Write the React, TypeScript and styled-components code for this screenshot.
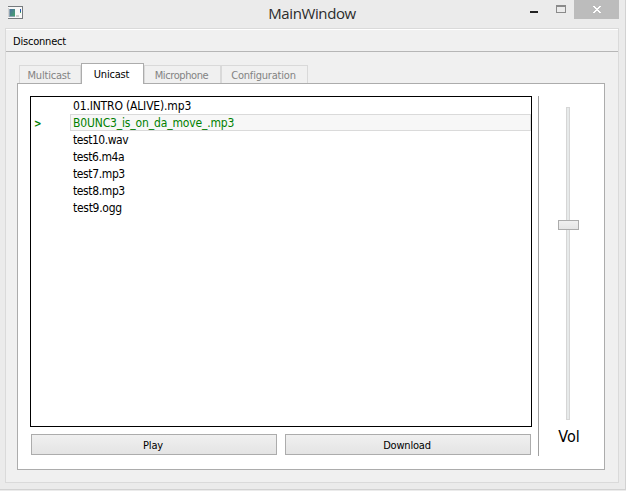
import React from "react";
import styled, { createGlobalStyle } from "styled-components";

const Global = createGlobalStyle`
  * { box-sizing: border-box; }
  body { margin: 0; background: #ebebeb; }
`;

const Window = styled.div`
  display: flex;
  flex-direction: column;
  width: 626px;
  height: 490px;
  padding: 0 6px 6px 5px;
  background: #ebebeb;
  border-right: 1px solid #d2d2d2;
  border-bottom: 1px solid #d2d2d2;
  font: 11px/14px "DejaVu Sans Condensed", "DejaVu Sans", sans-serif;
  letter-spacing: -0.2px;
  color: #000;
  cursor: default;
`;

const TitleBar = styled.header`
  display: grid;
  grid-template-columns: 99px 1fr 99px;
  height: 28px;
  flex: none;
`;

const AppIcon = styled.svg`
  width: 15px;
  height: 13px;
  margin: 6px 0 0 3px;
`;

const Title = styled.h1`
  margin: 3px 0 0;
  text-align: center;
  font: 400 15px/21px "Open Sans", sans-serif;
  letter-spacing: -0.38px;
  color: #2b2b2b;
`;

const Controls = styled.div`
  display: flex;
  justify-content: flex-end;
  height: 19px;
`;

const ControlButton = styled.button<{ $close?: boolean }>`
  width: ${(p) => (p.$close ? 45 : 27)}px;
  height: 19px;
  padding: 0;
  border: 0;
  background: ${(p) => (p.$close ? "#bcbcbc" : "transparent")};
  svg { display: block; }
`;

const Client = styled.main`
  flex: 1;
  display: flex;
  flex-direction: column;
  border: 1px solid #dadada;
  background: #f0f0f0;
`;

const MenuBar = styled.nav`
  height: 23px;
  padding: 5px 7px 0;
  border-top: 1px solid #fff;
  border-bottom: 1px solid #b6b6b6;
`;

const Tabs = styled.div`
  display: flex;
  align-items: flex-end;
  height: 31px;
  padding-left: 13px;
`;

const Tab = styled.div<{ $w: number; $spacing?: number; $active?: boolean }>`
  width: ${(p) => p.$w}px;
  height: ${(p) => (p.$active ? 21 : 18)}px;
  padding: ${(p) => (p.$active ? 4 : 3)}px 2px 0 0;
  margin-bottom: ${(p) => (p.$active ? -1 : 0)}px;
  text-align: center;
  letter-spacing: ${(p) => p.$spacing ?? -0.2}px;
  color: ${(p) => (p.$active ? "#000" : "#838383")};
  background: ${(p) => (p.$active ? "#fff" : "#f0f0f0")};
  border: 1px solid ${(p) => (p.$active ? "#acacac" : "#d9d9d9")};
  border-bottom: 0;
  z-index: ${(p) => (p.$active ? 1 : 0)};
`;

const Pane = styled.section`
  display: flex;
  width: 588px;
  height: 387px;
  margin-left: 11px;
  padding: 12px 0 0 12px;
  border: 1px solid #acacac;
  background: #fff;
`;

const Library = styled.div`
  width: 502px;
`;

const FileList = styled.div`
  height: 331px;
  border: 1px solid #000;
  font-size: 12px;
`;

const FileRow = styled.div<{ $current?: boolean }>`
  display: grid;
  grid-template-columns: 39px 1fr;
  height: 17px;
  color: ${(p) => (p.$current ? "#008000" : "#000")};
`;

const Marker = styled.span`
  padding-left: 3px;
  line-height: 19px;
  font-size: 10px;
  font-weight: 700;
`;

const FileName = styled.span<{ $current?: boolean; $spacing: number }>`
  height: 17px;
  padding-left: 2px;
  line-height: 17px;
  letter-spacing: ${(p) => p.$spacing}px;
  border: 1px solid ${(p) => (p.$current ? "#dadada" : "transparent")};
  background: ${(p) => (p.$current ? "#f7f7f7" : "transparent")};
`;

const Actions = styled.div`
  display: flex;
  gap: 8px;
  padding: 7px 1px 0;
`;

const ActionButton = styled.button`
  width: 246px;
  height: 21px;
  padding: 2px 2px 0 0;
  border: 1px solid #acacac;
  background: linear-gradient(#f0f0f0, #e4e4e4);
  font: inherit;
  letter-spacing: inherit;
  color: #000;
`;

const Divider = styled.div`
  width: 1px;
  height: 360px;
  margin-left: 6px;
  background: #a0a0a0;
`;

const Volume = styled.div`
  display: flex;
  flex-direction: column;
  align-items: center;
  width: 58px;
  padding-top: 11px;
`;

const Track = styled.div`
  display: flex;
  flex-direction: column;
  align-items: center;
  width: 4px;
  height: 313px;
  padding-top: 112px;
  border: 1px solid #d6d6d6;
  background: #e7eaea;
`;

const Thumb = styled.div`
  flex: none;
  width: 21px;
  height: 10px;
  margin-left: 1px;
  border: 1px solid #acacac;
  background: linear-gradient(#f0f0f0, #e5e5e5);
`;

const VolumeLabel = styled.label`
  margin: 7px 0 0 2px;
  font-size: 16px;
  line-height: 20px;
  letter-spacing: 0;
`;

const TABS = [
  { name: "Multicast", width: 62 },
  { name: "Unicast", width: 63, active: true },
  { name: "Microphone", width: 77, spacing: -0.4 },
  { name: "Configuration", width: 87 },
];

const FILES = [
  { name: "01.INTRO (ALIVE).mp3", spacing: -0.16 },
  { name: "B0UNC3_is_on_da_move_.mp3", spacing: -0.15 },
  { name: "test10.wav", spacing: -0.45 },
  { name: "test6.m4a", spacing: -0.42 },
  { name: "test7.mp3", spacing: -0.38 },
  { name: "test8.mp3", spacing: -0.38 },
  { name: "test9.ogg", spacing: -0.28 },
];
const CURRENT = 1;

export default function App() {
  return (
    <>
      <Global />
      <Window>
        <TitleBar>
          <AppIcon viewBox="0 0 15 13" shapeRendering="crispEdges">
            <defs>
              <linearGradient id="screen" x1="0" y1="0" x2="1" y2="1">
                <stop offset="0" stopColor="#4f70a0" />
                <stop offset="1" stopColor="#45a36c" />
              </linearGradient>
            </defs>
            <rect width="15" height="13" fill="#777b7e" />
            <rect y="1" width="14" height="11" fill="#f8f8f8" />
            <rect x="0" y="2" width="1" height="9" fill="#d2d2d2" />
            <rect x="1" y="3" width="6" height="8" fill="#8fa4b4" />
            <rect x="2" y="3" width="5" height="7" fill="url(#screen)" />
            <rect x="8" y="9" width="3" height="2" fill="#cfcfcf" />
            <rect x="12" y="3" width="1" height="3" fill="#2458a8" />
            <rect x="12" y="6" width="1" height="1" fill="#49a85c" />
          </AppIcon>
          <Title>MainWindow</Title>
          <Controls>
            <ControlButton aria-label="Minimize">
              <svg width="27" height="19" shapeRendering="crispEdges">
                <rect x="10" y="11" width="8" height="2" fill="#222" />
              </svg>
            </ControlButton>
            <ControlButton aria-label="Maximize">
              <svg width="27" height="19" shapeRendering="crispEdges">
                <path d="M9 5h10v8H9zM10 7v5h8V7z" fill="#8a8a8a" fillRule="evenodd" />
              </svg>
            </ControlButton>
            <ControlButton $close aria-label="Close">
              <svg width="45" height="19" shapeRendering="crispEdges">
                <path
                  d="M19 6h2v1h1v1h2V7h1V6h2v1h-1v1h-1v1h-1v1h1v1h1v1h1v1h-2v-1h-1v-1h-2v1h-1v1h-2v-1h1v-1h1v-1h1V9h-1V8h-1V7h-1z"
                  fill="#fff"
                />
              </svg>
            </ControlButton>
          </Controls>
        </TitleBar>
        <Client>
          <MenuBar>Disconnect</MenuBar>
          <Tabs>
            {TABS.map((t) => (
              <Tab key={t.name} $w={t.width} $spacing={t.spacing} $active={t.active}>
                {t.name}
              </Tab>
            ))}
          </Tabs>
          <Pane>
            <Library>
              <FileList>
                {FILES.map((f, i) => (
                  <FileRow key={f.name} $current={i === CURRENT}>
                    <Marker>{i === CURRENT ? ">" : ""}</Marker>
                    <FileName $current={i === CURRENT} $spacing={f.spacing}>
                      {f.name}
                    </FileName>
                  </FileRow>
                ))}
              </FileList>
              <Actions>
                <ActionButton>Play</ActionButton>
                <ActionButton>Download</ActionButton>
              </Actions>
            </Library>
            <Divider />
            <Volume>
              <Track>
                <Thumb />
              </Track>
              <VolumeLabel>Vol</VolumeLabel>
            </Volume>
          </Pane>
        </Client>
      </Window>
    </>
  );
}
